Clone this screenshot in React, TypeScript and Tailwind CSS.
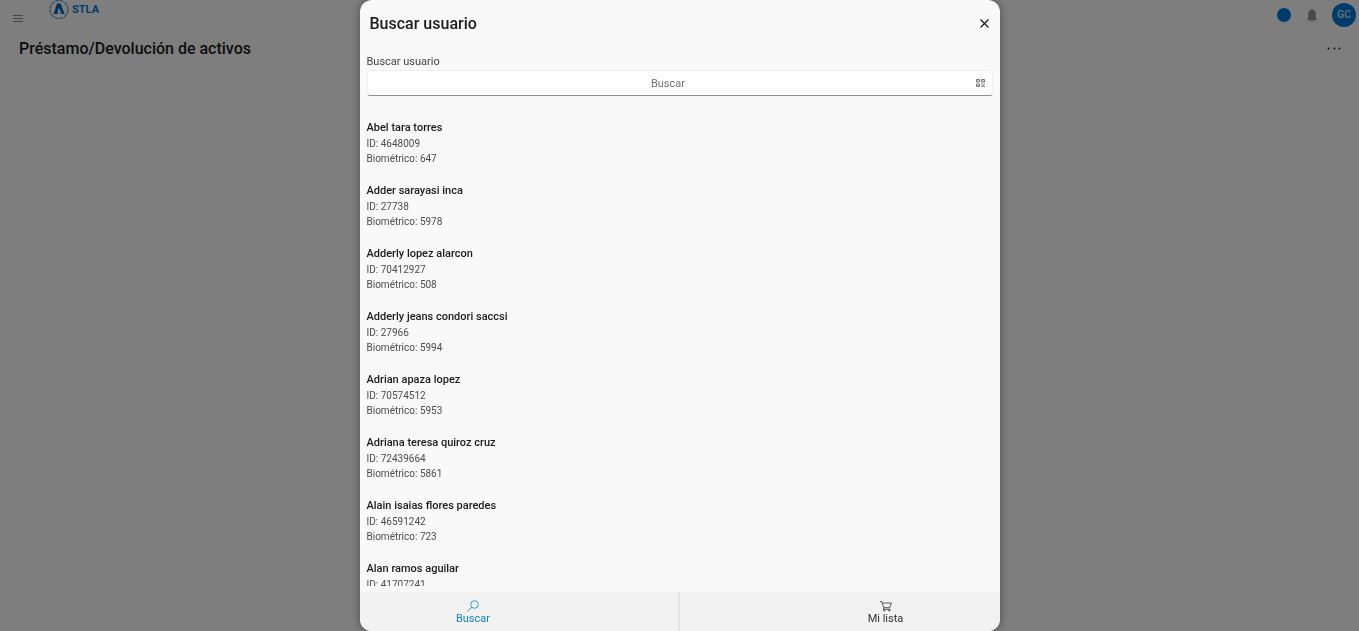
import { useState } from 'react'

interface User {
  name: string
  id: string
  biometric?: string
}

const USERS: User[] = [
  { name: 'Abel tara torres', id: '4648009', biometric: '647' },
  { name: 'Adder sarayasi inca', id: '27738', biometric: '5978' },
  { name: 'Adderly lopez alarcon', id: '70412927', biometric: '508' },
  { name: 'Adderly jeans condori saccsi', id: '27966', biometric: '5994' },
  { name: 'Adrian apaza lopez', id: '70574512', biometric: '5953' },
  { name: 'Adriana teresa quiroz cruz', id: '72439664', biometric: '5861' },
  { name: 'Alain isaias flores paredes', id: '46591242', biometric: '723' },
  { name: 'Alan ramos aguilar', id: '41707241' },
]

function Logo() {
  return (
    <svg viewBox="0 0 20 20" className="size-5" fill="none">
      <circle cx="10" cy="9.500" r="9" stroke="#3f8fd0" strokeWidth="1.1" strokeDasharray="4 0.8" />
      <path d="M8 3.500h3.600L15.600 14h-3.200l-1.600-4.500L9.500 8 8.400 14H4.600z" fill="#0063b5" />
      <path d="M9.400 12.700h3.200M11 11.100v3.200" stroke="#9cc8ee" strokeWidth="1" />
    </svg>
  )
}

function BellIcon() {
  return (
    <svg viewBox="0 0 10 13" className="h-[13px] w-[10px]" fill="#949494">
      <path d="M5 0a1 1 0 0 0-1 1C2 1.500 1.200 3 1.200 5v4.200L0 10.500v.7h10v-.7L8.800 9.200V5C8.800 3 8 1.500 6 1a1 1 0 0 0-1-1zM3.800 11.700a1.200 1.200 0 0 0 2.400 0z" />
    </svg>
  )
}

function QrIcon() {
  return (
    <svg viewBox="0 0 9 8" className="h-2 w-[9px]" fill="none" stroke="#777">
      <path d="M.5.5h3v2.500h-3zM5.500.5h3v2.500h-3zM.5 5h3v2.500h-3z" />
      <path d="M1.500 1.800h1M6.500 1.800h1M1.500 6.300h1M5 5h1.500M7.500 5H9M6 6.300h2M5 7.500h1.500M7.500 7.500H9" />
    </svg>
  )
}

function SearchIcon() {
  return (
    <svg viewBox="0 0 12 12" className="size-3" fill="none" stroke="currentColor">
      <circle cx="7.500" cy="4.500" r="3.800" strokeWidth="0.8" />
      <path d="M4.800 7.200.5 11.500" strokeWidth="0.8" />
    </svg>
  )
}

function CartIcon() {
  return (
    <svg viewBox="0 0 12 12" className="size-3" fill="none" stroke="currentColor" strokeWidth="0.8">
      <path d="M0 1.500h1.700l2.100 6.200h6L11.300 3H2.200M3.800 7.700 3.300 9.300h7" />
      <circle cx="4.300" cy="10.400" r="0.700" />
      <circle cx="9.300" cy="10.400" r="0.700" />
    </svg>
  )
}

function AssetsPage() {
  return (
    <div>
      <header className="flex h-8 items-start justify-between pr-[3px]">
        <div className="flex items-start">
          <button type="button" aria-label="Menú" className="mt-[14px] ml-[13px]">
            <svg viewBox="0 0 10 8" className="h-2 w-[10px]" stroke="#8a8a8a">
              <path d="M0 1.500h10M0 4.500h10M0 7.500h10" />
            </svg>
          </button>
          <a href="#inicio" className="ml-[26px] flex h-5 items-center gap-[3px]">
            <Logo />
            <span className="text-[11px] leading-5 font-bold text-[#0078d4]">STLA</span>
          </a>
        </div>
        <div className="flex items-center pt-[3px]">
          <span className="size-[14px] rounded-full bg-[#0078d4]" />
          <button type="button" aria-label="Notificaciones" className="ml-4 mr-[15px]">
            <BellIcon />
          </button>
          <button
            type="button"
            className="size-6 rounded-full bg-[#0078d4] text-[10px] leading-6 text-white"
          >
            GC
          </button>
        </div>
      </header>

      <div className="flex h-8 items-center justify-between pt-px pl-[19px] pr-[18px]">
        <h1 className="text-[16px] font-medium text-[#1b1b1b]">Préstamo/Devolución de activos</h1>
        <button type="button" aria-label="Más opciones">
          <svg viewBox="0 0 14 4" className="h-1 w-[14px]" fill="#111">
            <circle cx="1.500" cy="1.500" r="0.900" />
            <circle cx="7.500" cy="1.500" r="0.900" />
            <circle cx="12.500" cy="1.500" r="0.900" />
          </svg>
        </button>
      </div>
    </div>
  )
}

export default function App() {
  const [query, setQuery] = useState('')
  const users = USERS.filter((u) => u.name.toLowerCase().includes(query.toLowerCase()))

  return (
    <div className="h-screen overflow-hidden bg-[#fdfdfd] font-[Roboto,sans-serif] text-[#333]">
      <AssetsPage />

      <div className="fixed inset-0 flex justify-center bg-black/50">
        <div
          role="dialog"
          aria-label="Buscar usuario"
          className="flex w-full max-w-[640px] flex-col overflow-hidden rounded-xl bg-[#f9f9f9] shadow-[0_0_10px_rgba(0,0,0,0.4)]"
        >
          <div className="flex h-[47px] shrink-0 items-center justify-between px-[10px]">
            <h2 className="text-[16px] font-medium text-[#1b1b1b]">Buscar usuario</h2>
            <button type="button" aria-label="Cerrar">
              <svg viewBox="0 0 10 10" className="size-[10px]" stroke="#111" strokeWidth="1.1">
                <path d="m.5.5 8 8M8.500.5l-8 8" />
              </svg>
            </button>
          </div>

          {/* Search box */}
          <div className="shrink-0 px-[7px] pt-[6px]">
            <label htmlFor="search" className="block text-[11px] leading-[17px] text-[#444]">
              Buscar usuario
            </label>
            <div className="flex h-[26px] items-center rounded-[3px] border border-[#f0f0f0] border-b-[#929292] bg-white pr-[7px]">
              <input
                id="search"
                type="text"
                value={query}
                onChange={(e) => setQuery(e.target.value)}
                placeholder="Buscar"
                className="h-full min-w-0 flex-1 pt-px pr-[7px] text-center text-[11px] outline-none placeholder:text-[#717171]"
              />
              <button type="button" aria-label="Escanear código">
                <QrIcon />
              </button>
            </div>
          </div>

          {/* Results */}
          <ul className="mb-[6px] min-h-0 flex-1 overflow-hidden px-[7px] pt-6">
            {users.map((u) => (
              <li key={u.id} className="h-[63px]">
                <p className="text-[11px] leading-4 font-medium text-[#1b1b1b]">{u.name}</p>
                <p className="text-[10px] leading-[15px] text-[#4c4c4c]">ID: {u.id}</p>
                {u.biometric && (
                  <p className="text-[10px] leading-[15px] text-[#4c4c4c]">Biométrico: {u.biometric}</p>
                )}
              </li>
            ))}
          </ul>

          <nav className="grid h-[39px] shrink-0 grid-cols-2 bg-[#f2f2f2] text-[11px]">
            <button
              type="button"
              className="flex flex-col items-center justify-center border-r-2 border-[#e4e4e4] pt-[2px] pr-[91px] leading-[14px] text-[#0f80d7]"
            >
              <SearchIcon />
              Buscar
            </button>
            <button
              type="button"
              className="flex flex-col items-center justify-center pt-[2px] pl-[92px] leading-[14px]"
            >
              <CartIcon />
              Mi lista
            </button>
          </nav>
        </div>
      </div>
    </div>
  )
}
